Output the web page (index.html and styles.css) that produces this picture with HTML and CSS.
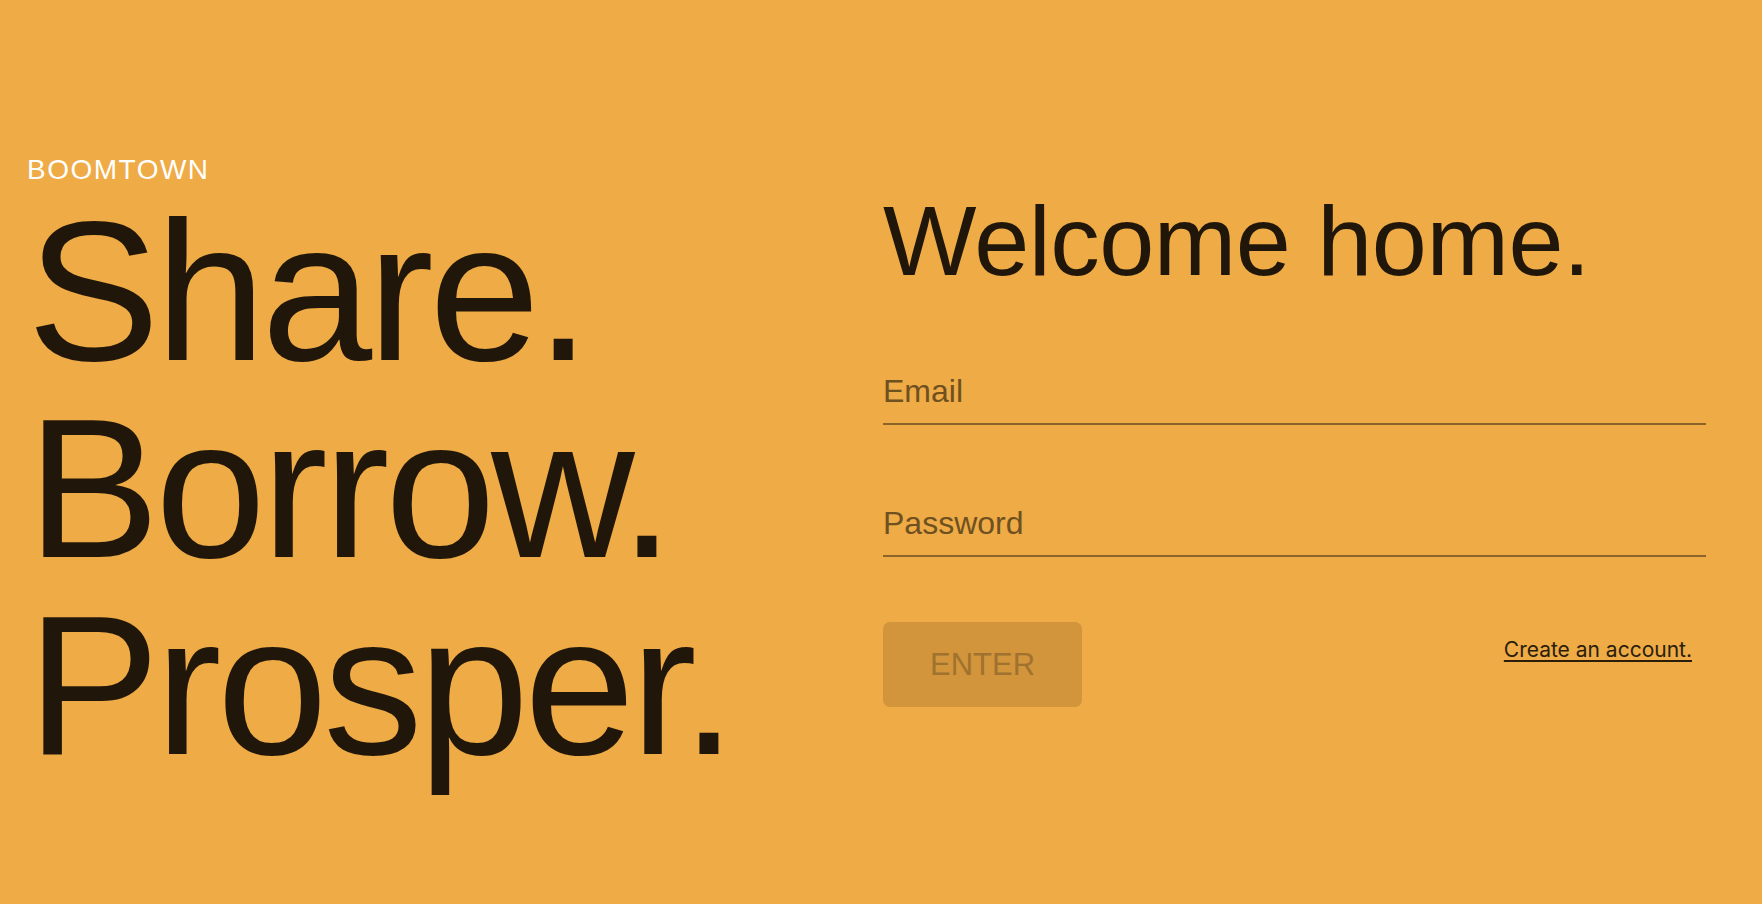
FILE: index.html
```html
<!DOCTYPE html>
<html lang="en">
<head>
<meta charset="utf-8">
<title>Boomtown</title>
<link rel="stylesheet" href="styles.css">
</head>
<body>
<main class="page">
  <section class="brand">
    <div class="logo">BOOMTOWN</div>
    <h1 class="tagline">
      <span class="tagline-line">Share.</span>
      <span class="tagline-line">Borrow.</span>
      <span class="tagline-line">Prosper.</span>
    </h1>
  </section>
  <section class="login">
    <h2 class="welcome">Welcome home.</h2>
    <form class="form">
      <input class="field" type="email" placeholder="Email">
      <input class="field field-password" type="password" placeholder="Password">
      <div class="actions">
        <button class="enter" type="button">ENTER</button>
        <a class="create" href="#">Create an account.</a>
      </div>
    </form>
  </section>
</main>
</body>
</html>
```

FILE: styles.css
```css
* { box-sizing: border-box; }

html, body {
  margin: 0;
  padding: 0;
}

body {
  background: #eeab46;
  font-family: "Liberation Sans", Arial, sans-serif;
  color: #201609;
  width: 1762px;
  height: 904px;
  overflow: hidden;
}

.page {
  display: flex;
  height: 904px;
}

.brand {
  width: 883px;
  padding: 153px 0 0 27px;
}

.logo {
  color: #ffffff;
  font-size: 28px;
  line-height: 33px;
  height: 33px;
  letter-spacing: 1.5px;
}

.tagline {
  margin: 7px 0 0 0;
  font-weight: normal;
  font-size: 199px;
  line-height: 197px;
  letter-spacing: -4.5px;
  display: flex;
  flex-direction: column;
}

.tagline-line {
  display: block;
}

.login {
  width: 823px;
  padding-top: 181px;
  display: flex;
  flex-direction: column;
}

.welcome {
  margin: 0;
  font-weight: normal;
  font-size: 99px;
  line-height: 120px;
  letter-spacing: -0.5px;
}

.form {
  display: flex;
  flex-direction: column;
  margin-top: 71px;
}

.field {
  display: block;
  width: 100%;
  box-sizing: content-box;
  height: 38px;
  line-height: 38px;
  padding: 0 0 13px 0;
  margin: 0;
  border: none;
  border-bottom: 2px solid #8a6429;
  background: transparent;
  font-family: "Liberation Sans", Arial, sans-serif;
  font-size: 32px;
  color: #201609;
  outline: none;
}

.field::placeholder {
  color: #6e5021;
  opacity: 1;
}

.field-password {
  margin-top: 79px;
}

.actions {
  display: flex;
  justify-content: space-between;
  align-items: flex-start;
  margin-top: 65px;
}

.enter {
  width: 199px;
  height: 85px;
  border: none;
  border-radius: 7px;
  background: #d2953b;
  color: #a0722f;
  font-family: "Liberation Sans", Arial, sans-serif;
  font-size: 31px;
  padding: 0;
  margin: 0;
}

.create {
  margin-top: 15px;
  margin-right: 14px;
  font-family: Inter, "Noto Sans", sans-serif;
  font-size: 21px;
  color: #2a1e0b;
  text-decoration: underline;
  text-underline-offset: 3px;
  text-decoration-thickness: 1.5px;
}
```
